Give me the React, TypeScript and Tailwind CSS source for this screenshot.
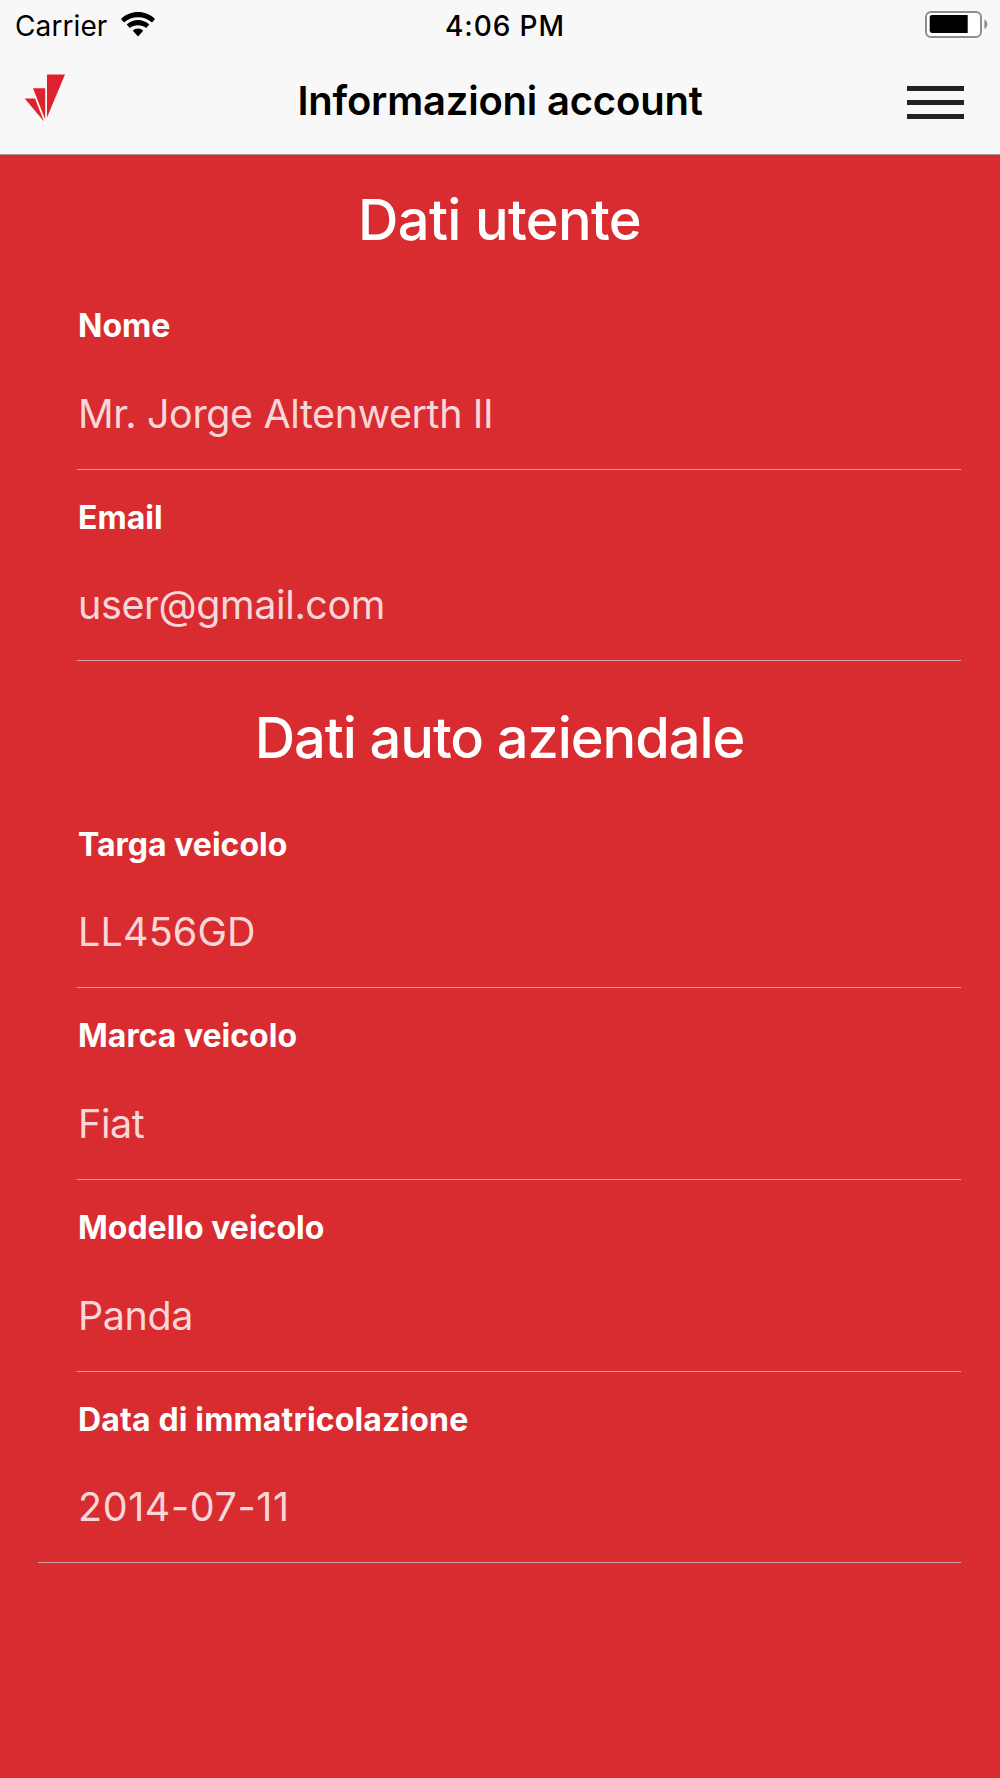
import clsx from "clsx";

type Field = {
  label: string;
  value: string;
  labelClass?: string;
  valueClass?: string;
};

const userFields: Field[] = [
  { label: "Nome", value: "Mr. Jorge Altenwerth II" },
  { label: "Email", value: "user@gmail.com" },
];

const carFields: Field[] = [
  { label: "Targa veicolo", value: "LL456GD", valueClass: "tracking-[0.15px]" },
  { label: "Marca veicolo", value: "Fiat" },
  { label: "Modello veicolo", value: "Panda" },
  {
    label: "Data di immatricolazione",
    value: "2014-07-11",
    labelClass: "tracking-[0.15px]",
    valueClass: "tracking-[0.6px]",
  },
];

const WifiIcon = () => (
  <svg width="34" height="25" viewBox="0 0 34 25" className="block">
    <path d="M0 6.9C9.5-2.2 24.5-2.2 34 6.9L31 10.5C23.2 3.6 10.8 3.6 3 10.5Z" />
    <path d="M5.7 12.6C12 6.4 22 6.4 28.3 12.6L25.2 16C20.6 12.2 13.4 12.2 8.8 16Z" />
    <path d="M11.8 18.8C14.6 15.8 19.4 15.8 22.2 18.8L17 24.4Z" />
  </svg>
);

const BatteryIcon = () => (
  <svg width="64" height="28" viewBox="0 0 64 28" className="block">
    <rect x="1" y="1" width="55" height="25" rx="5" fill="#fff" stroke="#8e8e8e" strokeWidth="2" />
    <path d="M7 4H42.7V22H7Q4.7 22 4.7 19.6V6.6Q4.7 4 7 4Z" />
    <path d="M59.4 8.4C63.4 10.4 63.4 16 59.4 18Z" fill="#8e8e8e" />
  </svg>
);

const Logo = () => (
  <svg width="42" height="48" viewBox="0 0 42 48" fill="#de212e" className="block">
    <path d="M23 .6H41L23 43.5Z" />
    <path d="M9 14.3H21.2V45.5Z" />
    <path d="M.7 24.6H11L20 47.4Z" />
  </svg>
);

const StatusBar = () => (
  <div className="flex h-[52px] items-start justify-between pr-[11px] pl-[15px]">
    <div className="flex w-[306px] items-start">
      <span className="mt-[6px] w-[106px] text-[28px] leading-[40px] tracking-[0.1px] whitespace-nowrap">
        Carrier
      </span>
      <div className="mt-[12px]">
        <WifiIcon />
      </div>
    </div>
    <span className="mt-[6px] text-[28px] leading-[40px] font-medium tracking-[0.9px]">
      4:06 PM
    </span>
    <div className="mt-[11px] flex w-[300px] justify-end">
      <BatteryIcon />
    </div>
  </div>
);

const NavBar = () => (
  <div className="flex h-[102px] items-start justify-between pr-9 pl-6">
    <div className="mt-[22px] w-[69px]">
      <Logo />
    </div>
    <h1 className="mt-[24px] text-[40px] leading-[50px] font-semibold tracking-[-0.2px]">
      Informazioni account
    </h1>
    <button aria-label="Menu" className="mt-[34px] grid w-[57px] gap-[9px]">
      <span className="h-[5px] bg-[#222]" />
      <span className="h-[5px] bg-[#222]" />
      <span className="h-[5px] bg-[#222]" />
    </button>
  </div>
);

const SectionTitle = ({ children, className }: { children: string; className: string }) => (
  <h2 className={clsx("pr-px text-center text-[56px] leading-[60px] font-medium", className)}>
    {children}
  </h2>
);

const FieldRow = ({
  label,
  value,
  labelClass,
  valueClass = "tracking-[-0.4px]",
  last,
}: Field & { last?: boolean }) => (
  <div
    className={clsx(
      "h-[191.67px] border-b border-[#d9a0a2] pt-7",
      last ? "ml-[38px] pl-[40px]" : "ml-[77px] pl-px",
    )}
  >
    <p className={clsx("text-[32px] leading-[40px] font-bold", labelClass)}>{label}</p>
    <p
      className={clsx(
        "mt-[43.5px] text-[39.5px] leading-[48px] font-normal text-[#f9d7d9]",
        valueClass,
      )}
    >
      {value}
    </p>
  </div>
);

export default function App() {
  return (
    <div className="h-[1778px] overflow-hidden bg-[#d92c30] font-['Inter',sans-serif] text-white">
      <header className="border-b border-[#a59a9a] bg-[#f8f8f8] text-black">
        <StatusBar />
        <NavBar />
      </header>

      <main>
        <section className="pt-[35px]">
          <SectionTitle className="tracking-[-0.7px]">Dati utente</SectionTitle>
          <div className="mt-[28px] mr-[39px]">
            {userFields.map((field) => (
              <FieldRow key={field.label} {...field} />
            ))}
          </div>
        </section>

        <section className="pt-[47px]">
          <SectionTitle className="tracking-[-1.1px]">Dati auto aziendale</SectionTitle>
          <div className="mt-[28.5px] mr-[39px]">
            {carFields.map((field, index) => (
              <FieldRow key={field.label} {...field} last={index === carFields.length - 1} />
            ))}
          </div>
        </section>
      </main>
    </div>
  );
}
